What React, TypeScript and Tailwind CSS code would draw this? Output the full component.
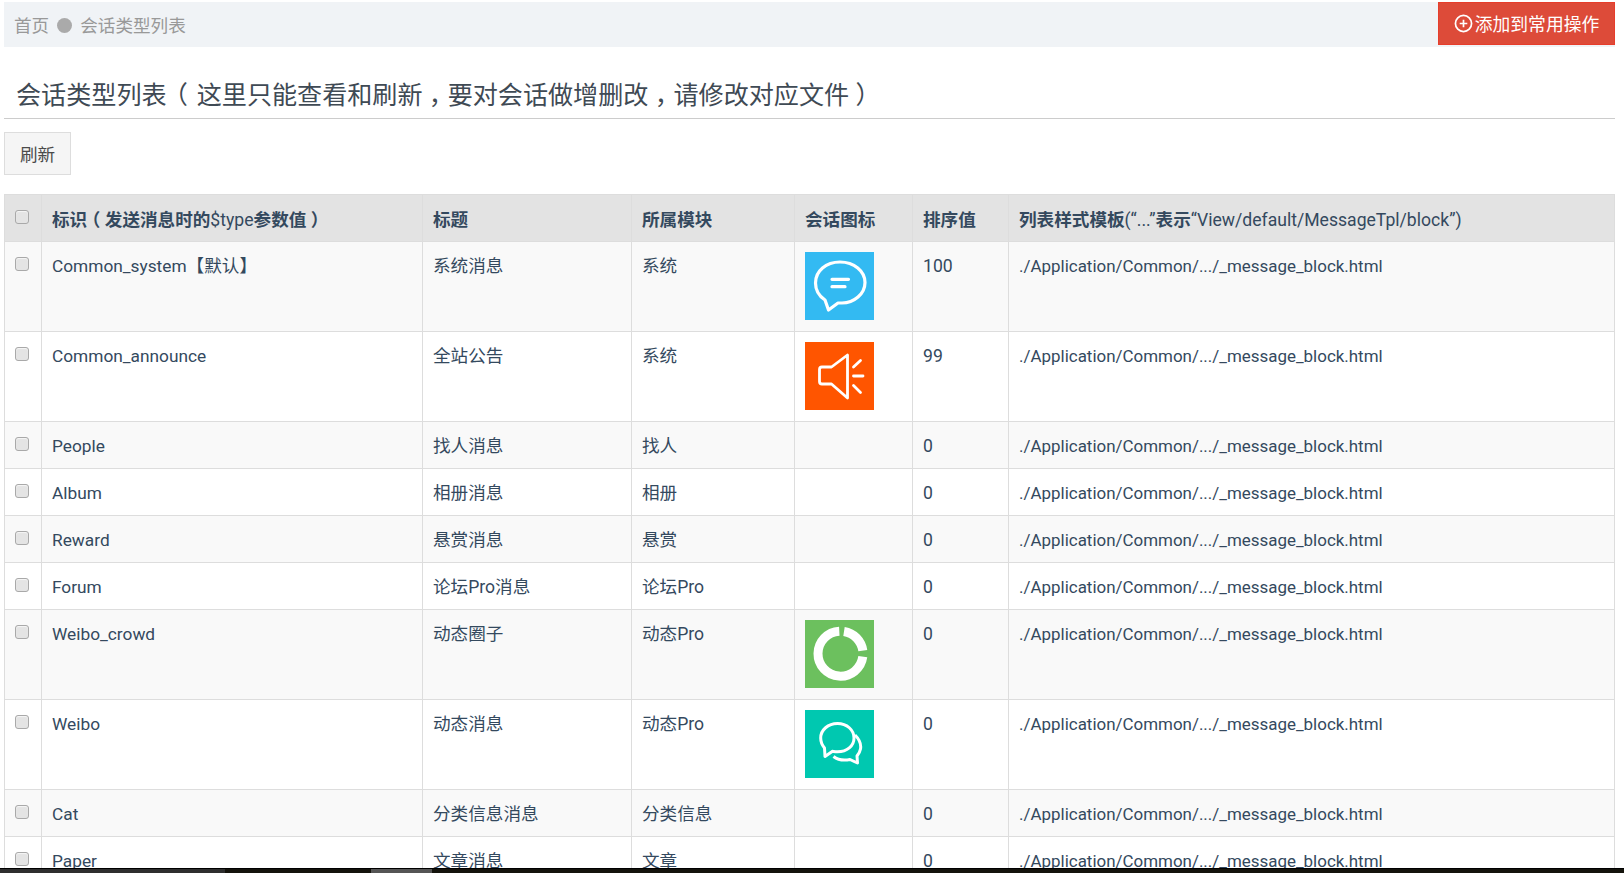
import type { ReactNode } from "react";

const Bubble = () => (
  <svg viewBox="0 0 69 68" className="block w-[69px] h-[68px]">
    <rect width="69" height="68" fill="#33baf2" />
    <path d="M20 48 C14 44 10.500 38 10.500 31 C10.500 19 21 10 35 10 C49 10 60 19 60 30.500 C60 42 49 51 37 51 L33 51 L23.500 58 Z" fill="none" stroke="#fff" strokeWidth="3.200" strokeLinejoin="round" />
    <path d="M27 27.300 H43.500 M27 34.700 H40" stroke="#fff" strokeWidth="3.200" strokeLinecap="round" />
  </svg>
);
const Speaker = () => (
  <svg viewBox="0 0 69 68" className="block w-[69px] h-[68px]">
    <rect width="69" height="68" fill="#ff5500" />
    <path d="M17 25 H26.500 L42.500 13 V56 L26.500 42 H17 Q14.500 42 14.500 39.500 V27.500 Q14.500 25 17 25 Z" fill="none" stroke="#fff" strokeWidth="2.800" strokeLinejoin="round" />
    <path d="M48.500 25 L55.500 18.500 M48.500 34 H58 M48.500 43.500 L55.500 50.500" stroke="#fff" strokeWidth="2.800" strokeLinecap="round" />
  </svg>
);
const Ring = () => (
  <svg viewBox="0 0 69 68" className="block w-[69px] h-[68px]">
    <rect width="69" height="68" fill="#6cc05e" />
    <path d="M34.300 11.200 A 22.500 22.500 0 1 0 57.800 36.700" fill="none" stroke="#fff" strokeWidth="9" />
    <path d="M39 11.500 A 22.500 22.500 0 0 1 57.800 30.700" fill="none" stroke="#fff" strokeWidth="9" />
  </svg>
);
const Chats = () => (
  <svg viewBox="0 0 69 68" className="block w-[69px] h-[68px]">
    <rect width="69" height="68" fill="#00c8b0" />
    <path d="M50 25 C54 29 56.500 33.500 55.500 39 C55 42 53.500 44 52 46 L52.500 53 L45 49.500 C40 50.500 33 50 28.500 46.500" fill="none" stroke="#fff" strokeWidth="3" strokeLinejoin="round" />
    <path d="M19.500 38 C17 35 15.700 31.500 15.700 28 C15.700 20 23 13.500 32.500 13.500 C42 13.500 49 20 49 28 C49 36 42 41.800 32.500 41.800 C30.500 41.800 29 41.500 27.500 41.300 L20 46.500 Z" fill="none" stroke="#fff" strokeWidth="3" strokeLinejoin="round" />
  </svg>
);

type Row = { id: ReactNode; title: string; mod: string; icon?: ReactNode; sort: string };
const rows: Row[] = [
  { id: <>Common_system<span className="text-[17.600px]">【默认】</span></>, title: "系统消息", mod: "系统", icon: <Bubble />, sort: "100" },
  { id: "Common_announce", title: "全站公告", mod: "系统", icon: <Speaker />, sort: "99" },
  { id: "People", title: "找人消息", mod: "找人", sort: "0" },
  { id: "Album", title: "相册消息", mod: "相册", sort: "0" },
  { id: "Reward", title: "悬赏消息", mod: "悬赏", sort: "0" },
  { id: "Forum", title: "论坛Pro消息", mod: "论坛Pro", sort: "0" },
  { id: "Weibo_crowd", title: "动态圈子", mod: "动态Pro", icon: <Ring />, sort: "0" },
  { id: "Weibo", title: "动态消息", mod: "动态Pro", icon: <Chats />, sort: "0" },
  { id: "Cat", title: "分类信息消息", mod: "分类信息", sort: "0" },
  { id: "Paper", title: "文章消息", mod: "文章", sort: "0" },
];
const Check = () => (
  <span className="block w-[14px] h-[14px] rounded-[3px] border border-[#a9a9a9] bg-[#e4e4e4] shadow-[inset_0_1px_1px_#f5f5f5]" />
);
const cell = "border border-[#dddddd] px-[10px] align-top";
const textCell = `${cell} pt-[11px] pb-[9px]`;
const headCell = `${cell} pt-[12px] pb-[8px]`;
const boxCell = `${cell} py-[10px]`;
const tpl = "./Application/Common/.../_message_block.html";
const Punct = ({ c }: { c: string }) => (
  <span className="px-[0.25em] [font-feature-settings:'halt']">{c}</span>
);

export default function App() {
  return (
    <div className="relative w-[1624px] h-[873px] overflow-hidden bg-white text-[#34495e] text-[17.600px] leading-[26px] [text-spacing-trim:space-all] font-['Roboto','Noto_Sans_CJK_SC',sans-serif]">
      <div className="pl-[4px] pr-[9px] pt-[2px]">
        <div className="flex h-[45px] items-start justify-between bg-[#f0f3f6]">
          <div className="flex h-[45px] items-center pl-[10px] pt-[2px] text-[#999999]">
            <span>首页</span>
            <span className="mx-[8px] w-[15px] h-[15px] rounded-full bg-[#aaaaaa]" />
            <span>会话类型列表</span>
          </div>
          <button className="flex h-[43px] w-[177px] items-center justify-center gap-[2px] border border-[#e73d2b] bg-[#dd4b39] text-[#ffffff]">
            <svg viewBox="0 0 20 20" className="w-[19px] h-[19px]" fill="none" stroke="#fff" strokeWidth="1.800">
              <circle cx="10" cy="10" r="8.500" />
              <path d="M10 6 V14 M6 10 H14" />
            </svg>
            <span className="pt-[2px] text-[17.800px]">添加到常用操作</span>
          </button>
        </div>
        <div className="mt-[17px] flex h-[55px] items-start border-b border-[#cccccc] pl-[12px] pt-[14px] text-[25.100px] leading-[35px] text-[#3f4a54]">
          <span>会话类型列表<span className="px-[0.35em] [font-feature-settings:'halt']">（</span>这里只能查看和刷新<Punct c="，" />要对会话做增删改<Punct c="，" />请修改对应文件<Punct c="）" /></span>
        </div>
        <button className="mt-[13px] block h-[43px] w-[67px] border border-[#dddddd] bg-[#f5f5f5] pt-[2px] text-[#4a4a4a] text-[17.600px]">刷新</button>
        <table className="mt-[19px] w-[1611px] table-fixed border-collapse">
          <colgroup>
            <col className="w-[37px]" />
            <col className="w-[381px]" />
            <col className="w-[209px]" />
            <col className="w-[163px]" />
            <col className="w-[118px]" />
            <col className="w-[96px]" />
            <col />
          </colgroup>
          <thead>
            <tr className="bg-[#e3e3e3] font-bold text-left">
              <th className={boxCell}><span className="block pt-[5px]"><Check /></span></th>
              <th className={headCell}>标识<Punct c="（" />发送消息时的<span className="font-normal">$type</span>参数值<Punct c="）" /></th>
              <th className={headCell}>标题</th>
              <th className={headCell}>所属模块</th>
              <th className={headCell}>会话图标</th>
              <th className={headCell}>排序值</th>
              <th className={headCell}>列表样式模板<span className="font-normal">(“...”</span>表示<span className="font-normal">“View/default/MessageTpl/block”)</span></th>
            </tr>
          </thead>
          <tbody>
            {rows.map((r, i) => {
              const tall = r.icon ? "h-[90px]" : "";
              return (
                <tr key={i} className={i % 2 === 0 ? "bg-[#f9f9f9]" : "bg-white"}>
                  <td className={`${boxCell} ${tall}`}><span className="block pt-[5px]"><Check /></span></td>
                  <td className={`${textCell} ${tall} text-[17.300px]`}>{r.id}</td>
                  <td className={`${textCell} ${tall}`}>{r.title}</td>
                  <td className={`${textCell} ${tall}`}>{r.mod}</td>
                  <td className={`${boxCell} ${tall}`}>{r.icon}</td>
                  <td className={`${textCell} ${tall}`}>{r.sort}</td>
                  <td className={`${textCell} ${tall} text-[16.950px]`}>{tpl}</td>
                </tr>
              );
            })}
          </tbody>
        </table>
      </div>
      <div className="absolute bottom-0 left-0 flex h-[5px] w-full items-stretch border-t border-black bg-[#14130c]">
        <div className="w-[225px] bg-[#2e2e2e]" />
        <div className="w-[146px]" />
        <div className="w-[61px] bg-[#555555]" />
      </div>
    </div>
  );
}
